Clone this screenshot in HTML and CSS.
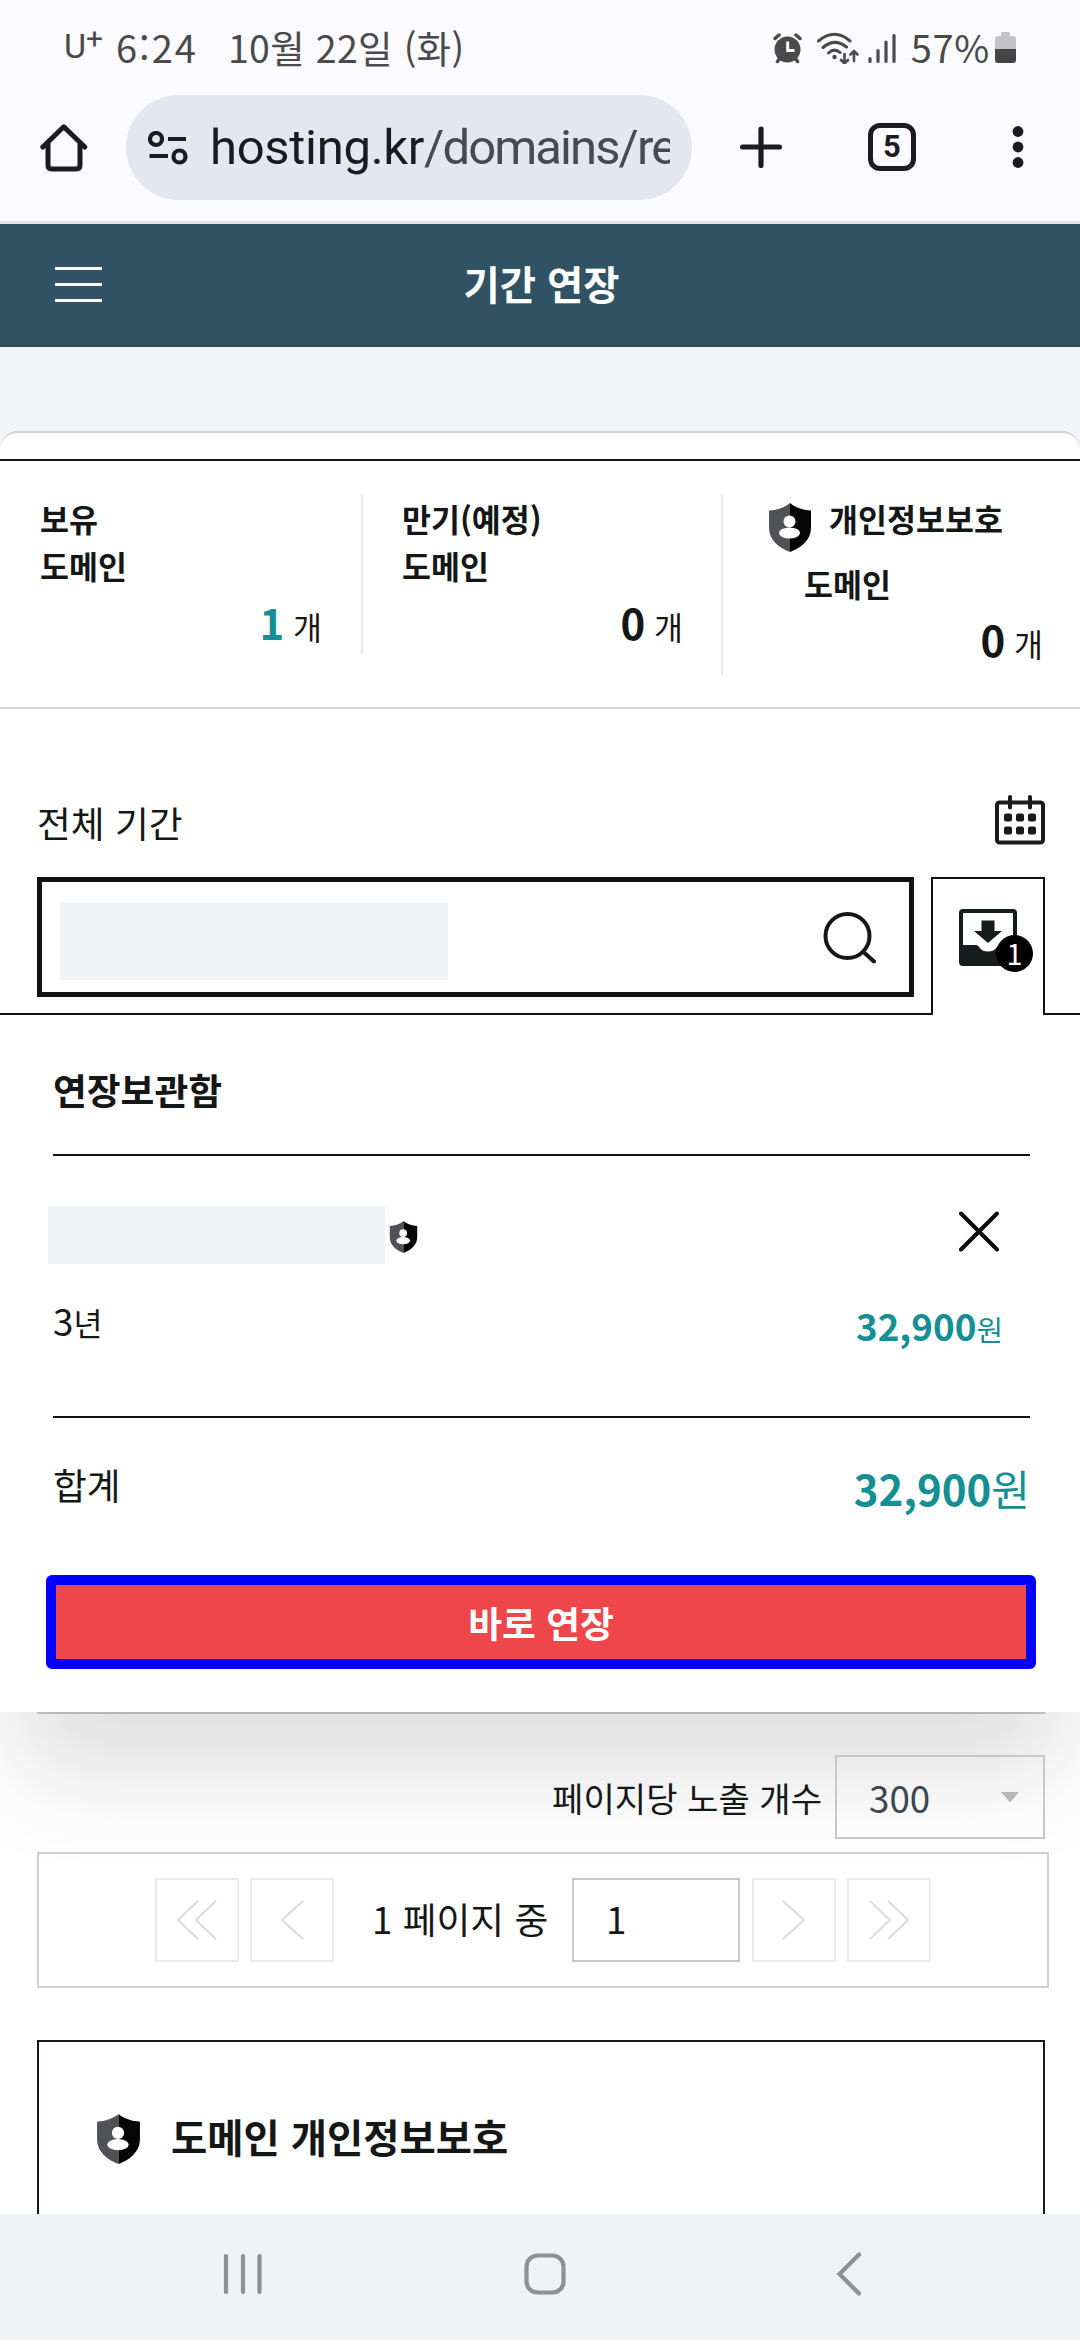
FILE: index.html
```html
<!DOCTYPE html>
<html lang="ko">
<head>
<meta charset="utf-8">
<title>기간 연장</title>
<link rel="stylesheet" href="styles.css">
</head>
<body>
<svg class="defs" width="0" height="0" aria-hidden="true">
  <symbol id="shield" viewBox="0 0 44 49">
    <path fill="#505257" d="M22 0C17 4.500 9 7 1 7.500V25C1 37 11 45 22 49Z"/>
    <path fill="#050505" d="M22 0C27 4.500 35 7 43 7.500V25C43 37 33 45 22 49Z"/>
    <circle cx="21.500" cy="18.500" r="6" fill="#fff"/>
    <ellipse cx="21.500" cy="30" rx="10.500" ry="5.500" fill="#fff"/>
  </symbol>
</svg>
<div class="screen">
  <header class="status">
    <span class="carrier">U<sup>+</sup></span>
    <span class="clock">6:24</span>
    <span class="date">10월 22일 (화)</span>
    <svg class="status-icons" width="124" height="32" viewBox="0 0 124 32">
      <g fill="none" stroke="#4a4a4b" stroke-linecap="round">
        <circle cx="14.500" cy="17.500" r="13" fill="#4a4a4b" stroke="none"/>
        <path stroke-width="3.500" d="M2 6.500L6 3M27 6.500L23 3M4.500 29.500L7 26M24.500 29.500L22 26"/>
        <path stroke="#fafaff" stroke-width="3" stroke-linecap="butt" d="M14.700 9.500V18.500H21.500"/>
        <path stroke-width="3" d="M45.500 9Q61.500-4.500 77 9M50 15.500Q61.500 5.500 73.500 15M55.500 21Q61.500 15.500 67 20.500"/>
        <circle cx="61.500" cy="25" r="2.200" fill="#4a4a4b" stroke="none"/>
        <path stroke-width="2.600" d="M71.500 22V31M68 28L71.500 31.500L75 28M81 29V20M77.500 22.500L81 19L84.500 22.500"/>
        <path stroke-width="3.200" d="M97 26.500V29.500M105 18.500V29.500M113 10V29.500M121 3.500V29.500"/>
      </g>
    </svg>
    <span class="percent">57%</span>
    <svg width="21" height="31" viewBox="0 0 21 31">
      <path fill="#c3c3c5" d="M6 1Q6 0 7 0H14Q15 0 15 1V4H18Q21 4 21 7V17H0V7Q0 4 3 4H6Z"/>
      <path fill="#454545" d="M0 17H21V28Q21 31 18 31H3Q0 31 0 28Z"/>
    </svg>
  </header>

  <div class="toolbar">
    <svg class="home" width="48" height="48" viewBox="0 0 48 48" fill="none" stroke="#1b1b21" stroke-width="5" stroke-linecap="round" stroke-linejoin="round">
      <path d="M2.800 23L23.800 2.800L44.800 23M8 19V41Q8 45 12 45H36Q40 45 40 41V19"/>
    </svg>
    <div class="omnibox">
      <svg width="41" height="34" viewBox="0 0 41 34" fill="none" stroke="#1b1b21" stroke-width="4.200">
        <circle cx="8" cy="8" r="6"/><circle cx="31.500" cy="25.500" r="6"/>
        <path d="M20 8H38M1.500 25H20"/>
      </svg>
      <div class="url">hosting.kr<span>/domains/re</span></div>
    </div>
    <svg class="plus" width="42" height="42" viewBox="0 0 42 42" stroke="#1b1b21" stroke-width="5.200" stroke-linecap="round"><path d="M21 3V39.500M2.600 21H39.400"/></svg>
    <div class="tabs">5</div>
    <svg class="more" width="12" height="44" viewBox="0 0 12 44" fill="#1b1b21"><circle cx="6" cy="6.500" r="5.400"/><circle cx="6" cy="22" r="5.400"/><circle cx="6" cy="37.500" r="5.400"/></svg>
  </div>

  <div class="titlebar">
    <div class="burger"><i></i><i></i><i></i></div>
    <h1>기간 연장</h1>
  </div>

  <main>
    <div class="sheet-top"></div>
    <section class="stats">
      <div class="stat"><div class="name">보유<br>도메인</div><div class="count teal"><b>1</b> 개</div></div>
      <div class="stat due"><div class="name">만기(예정)<br>도메인</div><div class="count"><b>0</b> 개</div></div>
      <div class="stat private">
        <div class="name lead"><svg width="44" height="49"><use href="#shield"/></svg>개인정보보호</div>
        <div class="name indent">도메인</div>
        <div class="count"><b>0</b> 개</div>
      </div>
    </section>

    <div class="period">
      <span>전체 기간</span>
      <svg width="50" height="50" viewBox="0 0 50 50" fill="none" stroke="#191b1b" stroke-width="4">
        <rect x="2" y="7.500" width="46" height="40" rx="2.500"/>
        <path stroke-linecap="round" d="M15 2V12.500M35 2V12.500"/>
        <g fill="#191b1b" stroke="none"><rect x="9" y="18.500" width="8" height="8" rx="2"/><rect x="21" y="18.500" width="8" height="8" rx="2"/><rect x="33" y="18.500" width="8" height="8" rx="2"/><rect x="9" y="31.500" width="8" height="8" rx="2"/><rect x="21" y="31.500" width="8" height="8" rx="2"/><rect x="33" y="31.500" width="8" height="8" rx="2"/></g>
      </svg>
    </div>

    <div class="search-row">
      <div class="search">
        <div class="mask"></div>
        <svg width="54" height="54" viewBox="0 0 54 54" fill="none" stroke="#151717" stroke-width="4"><circle cx="24.500" cy="26" r="22"/><path stroke-linecap="round" d="M41 42.500L51 51.500"/></svg>
      </div>
      <div class="basket">
        <svg width="58" height="58" viewBox="0 0 58 58">
          <path fill="#151c1c" fill-rule="evenodd" d="M4 0H54Q58 0 58 4V53Q58 57 54 57H4Q0 57 0 53V4Q0 0 4 0ZM4 4V36H17Q19 36 20 38Q23 42.500 29 42.500Q35 42.500 38 38Q39 36 41 36H54V4Z"/>
          <path fill="#151c1c" d="M22.500 11.500H35.500V22H43L29 34L15 22H22.500Z"/>
        </svg>
        <span class="badge">1</span>
      </div>
    </div>

    <section class="drawer">
      <h2>연장보관함</h2>
      <div class="item">
        <div class="item-head">
          <div class="mask"></div>
          <svg class="guard" width="29" height="32"><use href="#shield"/></svg>
          <svg class="close" width="40" height="41" viewBox="0 0 40 41" stroke="#080808" stroke-width="4" stroke-linecap="round"><path d="M2 2.500L38 38.500M38 2.500L2 38.500"/></svg>
        </div>
        <div class="item-body"><span class="term">3<small>년</small></span><span class="price"><b>32,900</b>원</span></div>
      </div>
      <div class="total"><span>합계</span><span class="sum"><b>32,900</b>원</span></div>
      <div class="pay">바로 연장</div>
    </section>

    <section class="list-foot">
      <div class="per-page"><span>페이지당 노출 개수</span>
        <div class="select">300<svg width="18" height="11" viewBox="0 0 18 11"><path fill="#b4b5b5" d="M0 0H18L9 10.500Z"/></svg></div>
      </div>
      <div class="pager">
        <div class="btn"><svg width="42" height="42" viewBox="0 0 42 42"><path d="M22 2L2 21L22 40M40 2L20 21L40 40"/></svg></div>
        <div class="btn"><svg width="42" height="42" viewBox="0 0 42 42"><path d="M32 2L11 21L32 40"/></svg></div>
        <span>1 페이지 중</span>
        <div class="page">1</div>
        <div class="btn"><svg width="42" height="42" viewBox="0 0 42 42"><path d="M10 2L31 21L10 40"/></svg></div>
        <div class="btn"><svg width="42" height="42" viewBox="0 0 42 42"><path d="M2 2L22 21L2 40M20 2L40 21L20 40"/></svg></div>
      </div>
      <div class="notice"><svg width="45" height="50"><use href="#shield"/></svg><span>도메인 개인정보보호</span></div>
    </section>
  </main>

  <nav class="navbar">
    <svg width="40" height="42" viewBox="0 0 40 42"><path d="M3 3V39M20 3V39M36.500 3V39"/></svg>
    <svg width="42" height="42" viewBox="0 0 42 42"><rect x="2.500" y="2.500" width="37" height="37" rx="11"/></svg>
    <svg width="26" height="44" viewBox="0 0 26 44"><path d="M23 2.500L3.500 22L23 41.500"/></svg>
  </nav>
</div>
</body>
</html>
```
FILE: styles.css
```css
* { box-sizing: border-box; margin: 0; }
body {
  width: 1080px; height: 2340px; overflow: hidden; background: #fff; color: #151717;
  font-family: "Noto Sans CJK KR", sans-serif; font-size: 36.75px; line-height: 1.5;
}
svg { display: block; flex: none; }
.defs { position: absolute; }
.screen { display: flex; flex-direction: column; height: 2340px; }

.status {
  display: flex; align-items: center; height: 95px; padding: 0 64px 2px 64px;
  background: #fafaff; color: #4a4a4b; font-size: 37.5px; line-height: 93px; white-space: nowrap;
}
.carrier { width: 52px; font-family: Roboto, sans-serif; font-weight: 400; font-size: 34px; }
.carrier sup { font-size: 30px; line-height: 0; vertical-align: 9px; }
.clock { width: 112px; font-size: 38px; letter-spacing: 2px; }
.date { letter-spacing: .3px; }
.status-icons { margin: 2px 0 0 auto; }
.status-icons ~ svg { margin-top: 2px; }
.percent { margin: 0 5px 0 14px; font-size: 38px; letter-spacing: .7px; }

.toolbar {
  display: flex; align-items: flex-start; height: 129px; padding-left: 40px;
  background: #fafaff; border-bottom: 3px solid #e0e2eb;
}
.home { margin-top: 29px; }
.omnibox {
  display: flex; align-items: center; width: 566px; height: 105px; margin-left: 38px; padding-left: 22px;
  background: #e4e7f0; border-radius: 53px;
}
.url {
  width: 460px; margin-left: 21px; overflow: hidden; white-space: nowrap;
  font: 400 49px/70px Roboto, sans-serif; letter-spacing: -.3px; color: #191b22;
}
.url span { color: #454a53; letter-spacing: -1.9px; }
.plus { margin: 31px 0 0 48px; }
.tabs {
  width: 48px; height: 48px; margin: 28px 0 0 86px; border: 5px solid #1b1b21; border-radius: 12px;
  font: 700 31px/38px Roboto, sans-serif; text-align: center; color: #1b1b21;
}
.more { margin: 30px 0 0 96px; }

.titlebar {
  display: grid; grid-template-columns: 102px 1fr 102px; align-items: center;
  height: 123px; background: #305262; border-bottom: 2px solid #344958;
}
.burger { display: flex; flex-direction: column; gap: 13px; margin-left: 55px; }
.burger i { height: 3px; background: #fff; }
h1 { padding: 0 0 4px 3px; text-align: center; color: #fff; font-size: 39.4px; font-weight: 700; }

main { display: flex; flex-direction: column; height: 1867px; padding-top: 84px; overflow: hidden; background: #fff; background-image: linear-gradient(#f3f4f8, #f3f4f8); background-size: 100% 112px; background-repeat: no-repeat; }
.sheet-top { flex: none; height: 28px; background: #fff; border-top: 2px solid #d0d2d6; border-radius: 18px 18px 0 0; }

.stats {
  display: grid; grid-template-columns: 363px 358px 359px; align-items: start; flex: none;
  height: 250px; padding-top: 34px; background: #fff; border-top: 2px solid #151717; border-bottom: 2px solid #d5d6d6;
}
.stat { height: 159px; padding: 0 39px 0 40px; border-right: 2px solid #e6e7e7; font-size: 31.5px; line-height: 47.25px; }
.stat.due { border: 0; padding-right: 38px; padding-left: 39px; }
.stat.private { height: 180px; padding: 0 37px 0 40px; border: 0; border-left: 2px solid #e6e7e7; }
.name { font-weight: 700; white-space: nowrap; }
.count { height: 63px; line-height: 63px; text-align: right; }
.count b { font-size: 42px; }
.teal b { color: #148f93; }
.lead { display: flex; gap: 17px; height: 65px; margin-left: 5px; }
.lead svg { margin-top: 8px; }
.indent { margin-left: 41px; }

.period { display: flex; justify-content: space-between; align-items: center; flex: none; height: 50px; margin: 86px 35px 0 37px; }
.period span { padding-top: 6px; }
.search-row { display: flex; justify-content: space-between; flex: none; height: 136px; margin-top: 32px; padding: 0 35px 0 37px; }
.search {
  display: flex; align-items: center; justify-content: space-between; width: 877px; height: 120px;
  padding: 0 32px 0 18px; border: 5px solid #111;
}
.mask { background: #eff3f6; }
.search .mask { width: 388px; height: 77px; margin-top: 9px; }
/* the tab overlaps the drawer's top rule by its own 2px */
.basket {
  position: relative; z-index: 1; width: 114px; height: 138px; padding: 30px 0 0 26px; background: #fff;
  border: 2px solid #111; border-bottom: 0;
}
.badge {
  position: absolute; left: 63px; top: 56px; width: 37px; height: 37px; border-radius: 50%;
  background: #000; color: #fff; font-size: 28.9px; line-height: 35px; text-align: center;
}

.drawer {
  flex: none; height: 699px; padding: 47px 50px 0 53px; background: #fff; border-top: 2px solid #111;
  box-shadow: 0 75px 95px -15px rgba(0,0,0,.13);
}
h2 { height: 55px; font-size: 36.75px; line-height: 55px; }
.item { height: 264px; margin-top: 37px; border-top: 2px solid #111; border-bottom: 2px solid #111; }
.item-head { display: flex; margin-left: -5px; padding-top: 50px; }
.item .mask { width: 337px; height: 58px; }
.guard { margin: 15px 0 0 4px; }
.close { margin: 5px 0 0 541px; }
.item-body { display: flex; justify-content: space-between; padding: 29px 27px 0 0; }
.term small { font-size: 31.5px; }
.price, .sum { color: #148f93; }
.item-body .price { padding-top: 5px; font-size: 28.9px; line-height: 55px; }
.price b { font-size: 36.75px; }
.total { display: flex; justify-content: space-between; height: 157px; padding-top: 38px; }
.total .sum { font-size: 42px; line-height: 63px; }
.total span:first-child { padding-top: 1px; }
.pay {
  height: 94px; margin: 0 -6px 0 -7px; border: 10px solid #0000fe; border-radius: 6px; background: #ef464c;
  color: #fff; font-weight: 700; line-height: 74px; text-align: center;
}

/* the drawer's shadow falls across this block, so it stays transparent */
.list-foot { position: relative; flex: none; margin-left: 37px; width: 1012px; }
.per-page { display: flex; align-items: flex-end; justify-content: flex-end; width: 1008px; height: 127px; border-top: 2px solid rgba(0,0,0,.2); }
.per-page span { margin-right: 13px; font-size: 34.1px; line-height: 84px; }
.select {
  display: flex; align-items: center; justify-content: space-between; width: 210px; height: 84px;
  padding: 0 24px 0 32px; border: 2px solid #c7c9c9; color: #3c4756; line-height: 76px;
}
.pager { display: flex; align-items: center; height: 136px; margin-top: 13px; padding-left: 116px; border: 2px solid #cfd0d0; }
.btn { display: flex; align-items: center; justify-content: center; width: 84px; height: 84px; margin-right: 11px; border: 2px solid #e9eaea; fill: none; stroke: #dcdddd; stroke-width: 2.2; }
.pager span { width: 200px; margin: 0 0 2px 27px; white-space: nowrap; }
.page { width: 168px; height: 84px; margin-right: 12px; padding-left: 32px; border: 2px solid #c8caca; line-height: 76px; }
.notice { display: flex; gap: 30px; width: 1008px; height: 200px; margin-top: 52px; padding: 72px 0 0 57px; border: 2px solid #171a1a; font-size: 39.4px; font-weight: 700; line-height: 44px; }

.navbar {
  display: flex; flex: none; align-items: center; height: 126px; padding: 0 219px 7px 223px; gap: 261px;
  background: #eff3f5; fill: none; stroke: #8e9192; stroke-width: 4.2; stroke-linecap: round;
}
.navbar svg:last-child { margin-left: 9px; }
```
